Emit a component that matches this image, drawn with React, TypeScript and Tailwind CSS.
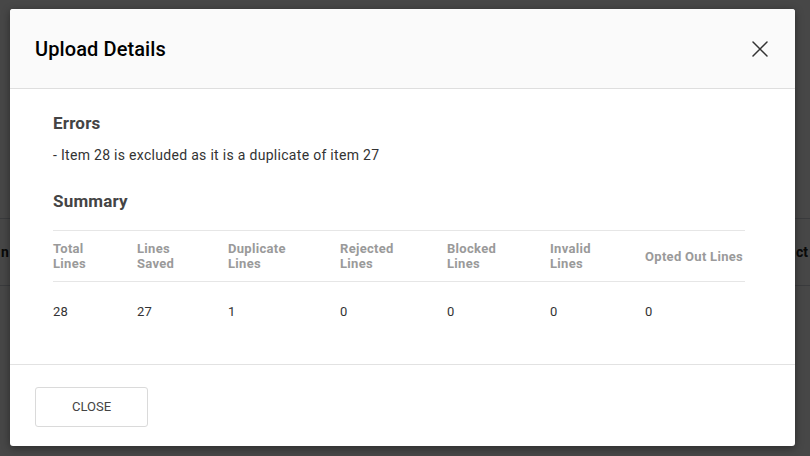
import React from 'react';

const columns = [
  { label: ['Total', 'Lines'], value: '28', w: 'w-[84px]' },
  { label: ['Lines', 'Saved'], value: '27', w: 'w-[91px]' },
  { label: ['Duplicate', 'Lines'], value: '1', w: 'w-[112px]' },
  { label: ['Rejected', 'Lines'], value: '0', w: 'w-[107px]' },
  { label: ['Blocked', 'Lines'], value: '0', w: 'w-[103px]' },
  { label: ['Invalid', 'Lines'], value: '0', w: 'w-[95px]' },
  { label: ['Opted Out Lines'], value: '0', w: 'w-[100px]' },
];

export default function App() {
  return (
    <div className="relative h-[456px] w-[810px] overflow-hidden bg-white font-['Roboto',sans-serif]">
      {/* page behind the backdrop */}
      <div className="pt-[218px]">
        <div className="border-y border-gray-300 flex justify-between items-center h-[68px] text-[14px] font-bold text-[#222] pl-[1px] pr-[2px]">
          <span>n</span>
          <span>ct</span>
        </div>
      </div>

      {/* backdrop */}
      <div className="absolute inset-0 bg-black/[0.72]" />

      {/* modal */}
      <div className="absolute left-[10px] top-[9px] w-[785px] h-[437px] bg-white rounded-[3px] shadow-[0_2px_8px_rgba(0,0,0,0.4)] flex flex-col overflow-hidden">
        <div className="h-[80px] shrink-0 bg-[#fafafa] border-b border-[#dedede] flex items-center justify-between pl-[25px] pr-[27px]">
          <h2 className="text-[20px] font-medium text-black tracking-[0.1px]">Upload Details</h2>
          <button type="button" className="text-[#333]">
            <svg width="16" height="16" viewBox="0 0 16 16" fill="none" stroke="currentColor" strokeWidth="1.5" strokeLinecap="round">
              <path d="M1 1L15 15M15 1L1 15" />
            </svg>
          </button>
        </div>

        <div className="flex-1 px-[43px] pt-[22px]">
          <h3 className="text-[17px] leading-[24px] font-bold text-[#444] tracking-[0.2px]">Errors</h3>
          <p className="mt-[10px] text-[14px] leading-[20px] text-[#333] tracking-[0.3px]">- Item 28 is excluded as it is a duplicate of item 27</p>

          <h3 className="mt-[24px] text-[17px] leading-[24px] font-bold text-[#444] tracking-[0.2px]">Summary</h3>

          <div className="mt-[17px] w-[692px]">
            <div className="flex items-center h-[52px] border-y border-[#e6e6e6]">
              {columns.map(c => (
                <div key={c.label.join(' ')} className={`${c.w} text-[13px] leading-[15px] font-bold text-[#9a9a9a] tracking-[0.3px]`}>
                  {c.label.map(l => <div key={l}>{l}</div>)}
                </div>
              ))}
            </div>
            <div className="flex items-center h-[60px]">
              {columns.map(c => (
                <div key={c.label.join(' ')} className={`${c.w} text-[13px] text-[#333] tracking-[0.3px]`}>{c.value}</div>
              ))}
            </div>
          </div>
        </div>

        <div className="h-[82px] shrink-0 border-t border-[#e2e2e2] px-[25px] pt-[22px]">
          <button type="button" className="w-[113px] h-[40px] border border-[#dadada] rounded-[3px] text-[13px] text-[#444] bg-white">
            CLOSE
          </button>
        </div>
      </div>
    </div>
  );
}
